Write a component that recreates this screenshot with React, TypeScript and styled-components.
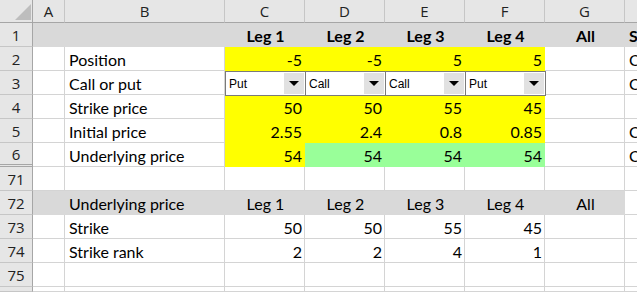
import styled, { createGlobalStyle } from 'styled-components';

const Colors = {
  grid: '#d4d4d4',
  headBg: '#e6e6e6',
  headLine: '#c6c6c6',
  headEdge: '#a6a6a6',
  headText: '#222222',
  band: '#d9d9d9',
  yellow: '#ffff00',
  green: '#99ff99',
  comboBorder: '#7a7a7a',
  comboButton: '#e1e1e1',
};

type Fill = 'yellow' | 'green' | 'band';
type Align = 'left' | 'right' | 'center';

interface CellDef {
  text?: string;
  fill?: Fill;
  align?: Align;
  bold?: boolean;
  pick?: string;
}

interface RowDef {
  n?: number;
  cells: CellDef[];
  foldBelow?: boolean;
}

const GlobalStyle = createGlobalStyle`
  html, body {
    margin: 0;
    padding: 0;
    background: #fff;
    overflow: hidden;
  }
`;

// last column and last row are only partly in view, like the window edge in excel
const Sheet = styled.div`
  display: grid;
  width: 637px;
  height: 292px;
  grid-template-columns: 33px 32px 160px repeat(5, 80px) 1fr;
  grid-template-rows: 23px repeat(11, 24px) 1fr;
  font-family: Lato, 'Liberation Sans', sans-serif;
  font-size: 16px;
  color: #000;
  overflow: hidden;
`;

const Corner = styled.div`
  box-sizing: border-box;
  background: ${Colors.headBg};
  border-right: 1px solid ${Colors.headEdge};
  border-bottom: 1px solid ${Colors.headEdge};
  display: flex;
  align-items: flex-end;
  justify-content: flex-end;
  padding: 0 1px 2px 0;

  svg {
    display: block;
  }
`;

const ColHead = styled.div<{ $edge?: boolean }>`
  box-sizing: border-box;
  background: ${Colors.headBg};
  border-right: ${(p) => (p.$edge ? 'none' : `1px solid ${Colors.headLine}`)};
  border-bottom: 1px solid ${Colors.headEdge};
  display: flex;
  align-items: center;
  justify-content: center;
  font-family: 'Open Sans', 'Noto Sans', sans-serif;
  font-size: 15px;
  color: ${Colors.headText};
  overflow: hidden;
`;

const RowHead = styled.div<{ $fold?: boolean }>`
  box-sizing: border-box;
  background: ${Colors.headBg};
  border-right: 1px solid ${Colors.headEdge};
  border-bottom: ${(p) => (p.$fold ? `3px double ${Colors.headEdge}` : `1px solid ${Colors.headLine}`)};
  display: flex;
  align-items: center;
  justify-content: center;
  font-family: 'Open Sans', 'Noto Sans', sans-serif;
  font-size: 15px;
  color: ${Colors.headText};
`;

const fillColor = (f?: Fill) => (f ? Colors[f] : undefined);

const Cell = styled.div<{ $fill?: Fill; $align?: Align; $bold?: boolean; $edge?: boolean }>`
  box-sizing: border-box;
  display: flex;
  align-items: flex-end;
  justify-content: ${(p) =>
    p.$align === 'right' ? 'flex-end' : p.$align === 'center' ? 'center' : 'flex-start'};
  padding: 0 2px 1px 4px;
  background: ${(p) => fillColor(p.$fill) ?? '#fff'};
  border-right: ${(p) => (p.$edge ? 'none' : `1px solid ${fillColor(p.$fill) ?? Colors.grid}`)};
  border-bottom: 1px solid ${(p) => fillColor(p.$fill) ?? Colors.grid};
  font-weight: ${(p) => (p.$bold ? 700 : 400)};
  line-height: 19px;
  white-space: nowrap;
  overflow: hidden;
`;

const ComboCell = styled.div`
  box-sizing: border-box;
  background: #fff;
  position: relative;
  z-index: 1;
`;

const Combo = styled.div`
  box-sizing: border-box;
  width: calc(100% + 1px);
  height: calc(100% + 1px);
  display: flex;
  align-items: stretch;
  border: 1px solid ${Colors.comboBorder};
  background: #fff;
  font-family: 'Liberation Sans', Arial, sans-serif;
  font-size: 12px;

  .label {
    flex: 1;
    display: flex;
    align-items: center;
    padding-left: 3px;
  }
`;

const ComboButton = styled.span`
  width: 20px;
  margin: 1px;
  background: ${Colors.comboButton};
  display: flex;
  align-items: center;
  justify-content: center;

  &::after {
    content: '';
    border-left: 5px solid transparent;
    border-right: 5px solid transparent;
    border-top: 5px solid #000;
  }
`;

const legs = ['Leg 1', 'Leg 2', 'Leg 3', 'Leg 4'];
const nums = (values: string[], fill?: Fill): CellDef[] => values.map((text) => ({ text, fill, align: 'right' }));
const blank: CellDef[] = [{}, {}, {}, {}, {}, {}, {}, {}];

const rows: RowDef[] = [
  {
    n: 1,
    cells: [
      { fill: 'band' },
      { fill: 'band' },
      ...legs.map((text): CellDef => ({ text, fill: 'band', align: 'center', bold: true })),
      { text: 'All', fill: 'band', align: 'center', bold: true },
      { text: 'S', fill: 'band', bold: true },
    ],
  },
  { n: 2, cells: [{}, { text: 'Position' }, ...nums(['-5', '-5', '5', '5'], 'yellow'), {}, { text: 'C' }] },
  {
    n: 3,
    cells: [{}, { text: 'Call or put' }, { pick: 'Put' }, { pick: 'Call' }, { pick: 'Call' }, { pick: 'Put' }, {}, { text: 'C' }],
  },
  { n: 4, cells: [{}, { text: 'Strike price' }, ...nums(['50', '50', '55', '45'], 'yellow'), {}, {}] },
  { n: 5, cells: [{}, { text: 'Initial price' }, ...nums(['2.55', '2.4', '0.8', '0.85'], 'yellow'), {}, { text: 'C' }] },
  {
    n: 6,
    foldBelow: true,
    cells: [
      {},
      { text: 'Underlying price' },
      ...nums(['54'], 'yellow'),
      ...nums(['54', '54', '54'], 'green'),
      {},
      { text: 'C' },
    ],
  },
  { n: 71, cells: blank },
  {
    n: 72,
    cells: [
      { fill: 'band' },
      { text: 'Underlying price', fill: 'band' },
      ...legs.map((text): CellDef => ({ text, fill: 'band', align: 'center' })),
      { text: 'All', fill: 'band', align: 'center' },
      {},
    ],
  },
  { n: 73, cells: [{}, { text: 'Strike' }, ...nums(['50', '50', '55', '45']), {}, {}] },
  { n: 74, cells: [{}, { text: 'Strike rank' }, ...nums(['2', '2', '4', '1']), {}, {}] },
  { n: 75, cells: blank },
  { cells: blank },
];

const columns = ['A', 'B', 'C', 'D', 'E', 'F', 'G', 'H'];

const SheetCell = ({ cell, edge }: { cell: CellDef; edge: boolean }) => {
  if (cell.pick) {
    return (
      <ComboCell>
        <Combo>
          <span className="label">{cell.pick}</span>
          <ComboButton />
        </Combo>
      </ComboCell>
    );
  }
  return (
    <Cell $fill={cell.fill} $align={cell.align} $bold={cell.bold} $edge={edge}>
      {cell.text}
    </Cell>
  );
};

const Row = ({ row }: { row: RowDef }) => (
  <>
    <RowHead $fold={row.foldBelow}>{row.n}</RowHead>
    {row.cells.map((cell, i) => (
      <SheetCell key={`${row.n}-${i}`} cell={cell} edge={i === row.cells.length - 1} />
    ))}
  </>
);

const App = () => (
  <>
    <GlobalStyle />
    <Sheet>
      <Corner>
        <svg width="16" height="16" viewBox="0 0 16 16">
          <polygon points="16,0 16,16 0,16" fill="#bdbdbd" />
        </svg>
      </Corner>
      {columns.map((c, i) => (
        <ColHead key={c} $edge={i === columns.length - 1}>
          {i === columns.length - 1 ? '' : c}
        </ColHead>
      ))}
      {rows.map((row, i) => (
        <Row key={i} row={row} />
      ))}
    </Sheet>
  </>
);

export default App;
